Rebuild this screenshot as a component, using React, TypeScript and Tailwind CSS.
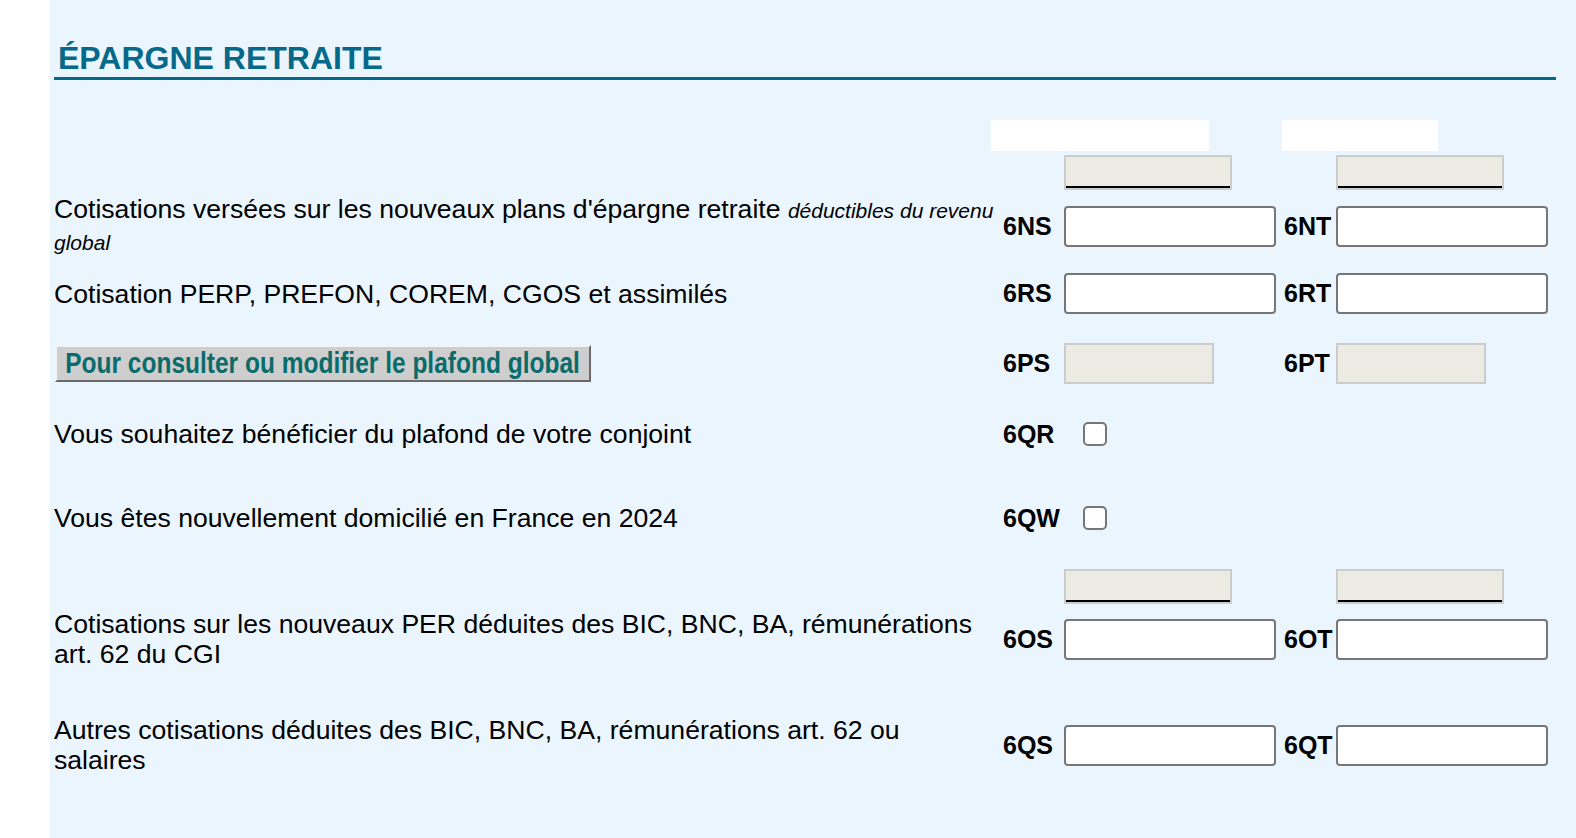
import React from 'react';

const FONT = { fontFamily: '"Liberation Sans", Arial, sans-serif' };

const TextInput: React.FC = () => (
  <input
    type="text"
    className="shrink-0 w-[212px] h-[41px] bg-white border-2 border-[#767676] rounded-[4px] outline-none"
  />
);

const ReadOnlyBox: React.FC = () => (
  <div className="shrink-0 w-[150px] h-[41px] bg-[#ebebe4] border-2 border-[#cccccc]" />
);

const GrayBar: React.FC = () => (
  <div className="shrink-0 w-[168px] h-[35px] bg-[#ebebe4] border-2 border-[#cccccc]">
    <div className="h-full border-b-2 border-black" />
  </div>
);

const Code: React.FC<{ children: React.ReactNode; w: string }> = ({ children, w }) => (
  <div className={`${w} shrink-0 text-[25px] font-bold text-black leading-none`}>{children}</div>
);

const Row: React.FC<{
  label: React.ReactNode;
  c1: string;
  c2?: string;
  right?: React.ReactNode;
  cls: string;
}> = ({ label, c1, c2, right, cls }) => (
  <div className={`flex items-center ${cls}`}>
    <div className="w-[949px] shrink-0 text-[26.6px] leading-[30px] text-black whitespace-nowrap">{label}</div>
    <Code w="w-[61px]">{c1}</Code>
    {right ?? (
      <>
        <TextInput />
        <div className="w-[8px] shrink-0" />
        <Code w="w-[52px]">{c2}</Code>
        <TextInput />
      </>
    )}
  </div>
);

const GrayBarsRow: React.FC<{ cls: string }> = ({ cls }) => (
  <div className={`flex ${cls}`}>
    <div className="w-[1010px] shrink-0" />
    <GrayBar />
    <div className="w-[104px] shrink-0" />
    <GrayBar />
  </div>
);

const Checkbox: React.FC = () => (
  <div className="shrink-0 ml-[19px] w-[24px] h-[24px] bg-white border-2 border-[#767676] rounded-[5px]" />
);

export default function App() {
  return (
    <div className="flex h-screen overflow-hidden bg-white" style={FONT}>
      <div className="w-[50px] shrink-0 bg-white" />
      <div className="flex-1 bg-[#ebf5fe] pl-[4px] pr-[20px] pt-[40px]">
        <div className="border-b-[3px] border-[#05698a] pb-px">
          <h1 className="pl-[4px] text-[32px] leading-[36px] font-bold text-[#05698a]">ÉPARGNE RETRAITE</h1>
        </div>

        <div className="flex mt-[40px]">
          <div className="w-[937px] shrink-0" />
          <div className="w-[218px] h-[31px] shrink-0 bg-white" />
          <div className="w-[73px] shrink-0" />
          <div className="w-[156px] h-[31px] shrink-0 bg-white" />
        </div>

        <GrayBarsRow cls="mt-[4px]" />

        <Row
          cls="mt-[4px]"
          c1="6NS"
          c2="6NT"
          label={
            <div className="leading-[31px]">
              Cotisations versées sur les nouveaux plans d'épargne retraite{' '}
              <i className="text-[21px]">déductibles du revenu</i>
              <br />
              <i className="text-[21px]">global</i>
            </div>
          }
        />

        <Row cls="mt-[15px]" c1="6RS" c2="6RT" label="Cotisation PERP, PREFON, COREM, CGOS et assimilés" />

        <div className="flex items-center mt-[28px] h-[42px]">
          <div className="w-[949px] shrink-0">
            <button
              type="button"
              className="w-[536px] h-[37px] ml-px bg-[#cecece] border-2 border-t-[#f4f4f4] border-l-[#f4f4f4] border-b-[#6a6a6a] border-r-[#6a6a6a] flex items-center justify-center overflow-hidden"
            >
              <span className="inline-block scale-x-[0.845] whitespace-nowrap text-[29px] leading-none font-bold text-[#0a6b6b]">
                Pour consulter ou modifier le plafond global
              </span>
            </button>
          </div>
          <Code w="w-[61px]">6PS</Code>
          <ReadOnlyBox />
          <div className="w-[70px] shrink-0" />
          <Code w="w-[52px]">6PT</Code>
          <ReadOnlyBox />
        </div>

        <Row
          cls="mt-[29px] h-[42px]"
          c1="6QR"
          label="Vous souhaitez bénéficier du plafond de votre conjoint"
          right={<Checkbox />}
        />

        <Row
          cls="mt-[42px] h-[42px]"
          c1="6QW"
          label="Vous êtes nouvellement domicilié en France en 2024"
          right={<Checkbox />}
        />

        <GrayBarsRow cls="mt-[30px]" />

        <Row
          cls="mt-[5px]"
          c1="6OS"
          c2="6OT"
          label={
            <>
              Cotisations sur les nouveaux PER déduites des BIC, BNC, BA, rémunérations
              <br />
              art. 62 du CGI
            </>
          }
        />

        <Row
          cls="mt-[46px]"
          c1="6QS"
          c2="6QT"
          label={
            <>
              Autres cotisations déduites des BIC, BNC, BA, rémunérations art. 62 ou
              <br />
              salaires
            </>
          }
        />
      </div>
    </div>
  );
}
